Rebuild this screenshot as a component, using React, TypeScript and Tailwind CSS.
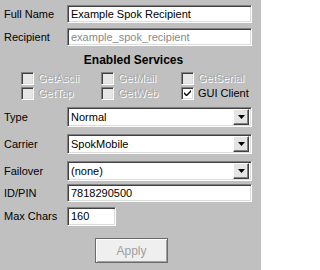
const sunken =
  'border border-t-[#808080] border-l-[#808080] border-b-white border-r-white shadow-[inset_1px_1px_0_#404040,inset_-1px_-1px_0_#dcdcdc]';

const Label = ({ children }: { children: React.ReactNode }) => (
  <div className="w-[63px] shrink-0 text-[11px] leading-[13px] text-black">{children}</div>
);

const TextField = ({ value, disabled, width = 'w-[185px]', height = 'h-[18px]' }: { value: string; disabled?: boolean; width?: string; height?: string }) => (
  <div className={`${width} ${height} bg-white ${sunken} flex items-center pl-[3px] text-[11px] leading-[13px] ${disabled ? 'text-[#8a8a8a]' : 'text-black'}`}>
    {value}
  </div>
);

const Select = ({ value }: { value: string }) => (
  <div className={`w-[185px] h-[20px] bg-white ${sunken} flex items-center justify-between pl-[3px] pr-[2px] text-[11px] leading-[13px] text-black`}>
    <span>{value}</span>
    <div className="w-[16px] h-[16px] bg-[#e4e4e4] border border-t-white border-l-white border-b-[#404040] border-r-[#404040] shadow-[inset_-1px_-1px_0_#808080] flex items-center justify-center">
      <svg width="7" height="4" viewBox="0 0 7 4">
        <path d="M0 0h7L3.5 4z" fill="#000" />
      </svg>
    </div>
  </div>
);

const Check = ({ label, checked, disabled }: { label: string; checked?: boolean; disabled?: boolean }) => (
  <div className="w-[80px] h-[13px] flex items-center gap-[4px]">
    <div className={`w-[13px] h-[13px] shrink-0 ${disabled ? 'bg-[#e6e6e6]' : 'bg-white'} ${sunken} flex items-center justify-center`}>
      {checked && (
        <svg width="7" height="7" viewBox="0 0 7 7">
          <path d="M0 2v2l2 2h1l4-4V0L2.5 4.5z" fill="#000" />
        </svg>
      )}
    </div>
    <span className={`text-[11px] leading-[13px] ${disabled ? 'text-[#a8a8a8] [text-shadow:1px_1px_0_#ffffff]' : 'text-black'}`}>{label}</span>
  </div>
);

const Row = ({ label, children, className = '' }: { label: string; children: React.ReactNode; className?: string }) => (
  <div className={`flex items-center ${className}`}>
    <Label>{label}</Label>
    {children}
  </div>
);

export default function App() {
  return (
    <div className="w-[261px] h-[270px] bg-[#c0c0c0] pl-[4px] pt-[5px] font-['Liberation_Sans',Arial,sans-serif] overflow-hidden">
      <Row label="Full Name">
        <TextField value="Example Spok Recipient" />
      </Row>
      <Row label="Recipient" className="mt-[5px]">
        <TextField value="example_spok_recipient" disabled />
      </Row>

      <div className="mt-[7px] h-[14px] leading-[14px] text-center text-[12px] font-bold text-black pl-[2px]">Enabled Services</div>

      <div className="mt-[5px] pl-[17px] flex flex-col gap-[2px]">
        <div className="flex">
          <Check label="GetAscii" disabled />
          <Check label="GetMail" disabled />
          <Check label="GetSerial" disabled />
        </div>
        <div className="flex">
          <Check label="GetTap" disabled />
          <Check label="GetWeb" disabled />
          <Check label="GUI Client" checked />
        </div>
      </div>

      <div className="mt-[7px] flex flex-col gap-[7px]">
        <Row label="Type">
          <Select value="Normal" />
        </Row>
        <Row label="Carrier">
          <Select value="SpokMobile" />
        </Row>
        <Row label="Failover">
          <Select value="(none)" />
        </Row>
      </div>

      <Row label="ID/PIN" className="mt-[3px]">
        <TextField value="7818290500" />
      </Row>
      <Row label="Max Chars" className="mt-[5px]">
        <TextField value="160" width="w-[49px]" height="h-[19px]" />
      </Row>

      <div className="mt-[12px] flex justify-center pr-[2px]">
        <div className="w-[73px] h-[25px] bg-[#efefef] border border-[#6b6b6b] shadow-[inset_1px_1px_0_#ffffff,inset_-1px_-1px_0_#a0a0a0] flex items-center justify-center text-[12px] text-[#a0a0a0]">
          Apply
        </div>
      </div>
    </div>
  );
}
